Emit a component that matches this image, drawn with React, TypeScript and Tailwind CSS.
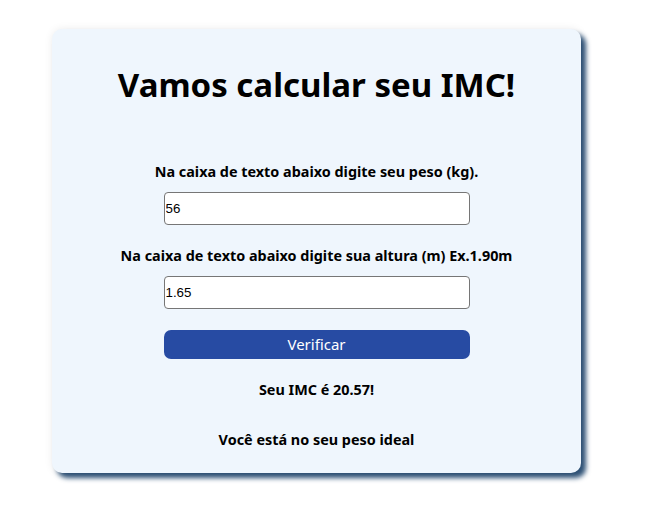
export default function App() {
  return (
    <div className="min-h-[510px] w-full bg-white pt-[29px] pl-[52px] font-['Noto_Sans',sans-serif]">
      <div className="flex h-[444px] w-[529px] flex-col items-center rounded-[10px] bg-[#eff6fd] shadow-[0_0_8px_rgba(0,0,0,0.08),5px_5px_5px_#2f5378]">
        <h1 className="mt-[33px] text-[33px] font-bold leading-[46px] text-black">Vamos calcular seu IMC!</h1>

        <label className="mt-[54px] text-[14.4px] font-bold leading-[20px] text-black">
          Na caixa de texto abaixo digite seu peso (kg).
        </label>
        <input
          defaultValue="56"
          className="mt-[10px] h-[33px] w-[306px] rounded-[4px] border border-[#767676] bg-white px-[1px] font-['Liberation_Sans',sans-serif] text-[13.3px] text-black"
        />

        <label className="mt-[21px] text-[14.4px] font-bold leading-[20px] text-black">
          Na caixa de texto abaixo digite sua altura (m) Ex.1.90m
        </label>
        <input
          defaultValue="1.65"
          className="mt-[10px] h-[33px] w-[306px] rounded-[4px] border border-[#767676] bg-white px-[1px] font-['Liberation_Sans',sans-serif] text-[13.3px] text-black"
        />

        <button className="mt-[21px] h-[29px] w-[306px] rounded-[7px] bg-[#274ba3] text-[15px] leading-[29px] text-white">
          Verificar
        </button>

        <p className="mt-[21px] text-[14.4px] font-bold leading-[20px] text-black">Seu IMC é 20.57!</p>
        <p className="mt-[30px] text-[14.4px] font-bold leading-[20px] text-black">Você está no seu peso ideal</p>
      </div>
    </div>
  );
}
